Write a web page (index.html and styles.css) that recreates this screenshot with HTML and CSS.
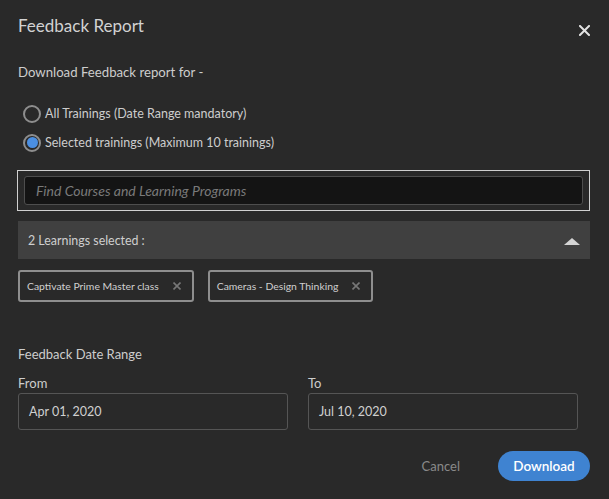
FILE: index.html
```html
<!DOCTYPE html>
<html>
<head>
<meta charset="utf-8">
<link rel="stylesheet" href="styles.css">
</head>
<body>
<div class="dialog">
  <div class="header">
    <h1 class="title">Feedback Report</h1>
    <button class="close" aria-label="Close">
      <svg width="11" height="11" viewBox="0 0 11 11"><path d="M1 1L10 10M10 1L1 10" stroke="#e2e2e2" stroke-width="2" stroke-linecap="square"/></svg>
    </button>
  </div>
  <p class="lead">Download Feedback report for -</p>
  <div class="radios">
    <label class="radio"><span class="ring"></span><span>All Trainings (Date Range mandatory)</span></label>
    <label class="radio"><span class="ring checked"></span><span>Selected trainings (Maximum 10 trainings)</span></label>
  </div>
  <div class="search">
    <div class="search-input">Find Courses and Learning Programs</div>
  </div>
  <div class="selbar">
    <span>2 Learnings selected :</span>
    <span class="tri"></span>
  </div>
  <div class="chips">
    <div class="chip"><span>Captivate Prime Master class</span><svg width="8" height="8" viewBox="0 0 8 8"><path d="M0.5 0.5L7.5 7.5M7.5 0.5L0.5 7.5" stroke="#777" stroke-width="1.6"/></svg></div>
    <div class="chip"><span>Cameras - Design Thinking</span><svg width="8" height="8" viewBox="0 0 8 8"><path d="M0.5 0.5L7.5 7.5M7.5 0.5L0.5 7.5" stroke="#777" stroke-width="1.6"/></svg></div>
  </div>
  <p class="section">Feedback Date Range</p>
  <div class="dates">
    <div class="field">
      <div class="label">From</div>
      <div class="date">Apr 01, 2020</div>
    </div>
    <div class="field">
      <div class="label">To</div>
      <div class="date">Jul 10, 2020</div>
    </div>
  </div>
  <div class="actions">
    <button class="cancel">Cancel</button>
    <button class="download">Download</button>
  </div>
</div>
</body>
</html>
```
FILE: styles.css
```css
html, body {
  margin: 0;
  padding: 0;
  background: #292929;
}
body {
  font-family: "Lato", "Open Sans", sans-serif;
  color: #cdcdcd;
  width: 609px;
  height: 499px;
  overflow: hidden;
}
.dialog {
  padding: 0 19px 0 18px;
}
.header {
  display: flex;
  justify-content: space-between;
  align-items: flex-start;
  padding-top: 14px;
  height: 48px;
  box-sizing: border-box;
}
.title {
  margin: 0;
  font-size: 17px;
  line-height: 24px;
  font-weight: 400;
  color: #d2d2d2;
}
.close {
  background: none;
  border: 0;
  padding: 0;
  margin: 11px 0 0 0;
  width: 11px;
  height: 11px;
  display: block;
  line-height: 0;
}
.lead {
  margin: 14px 0 0 0;
  font-size: 13.2px;
  line-height: 20px;
}
.radios {
  margin-top: 17px;
  display: flex;
  flex-direction: column;
}
.radio {
  display: flex;
  align-items: center;
  height: 29px;
  gap: 4px;
  font-size: 12.5px;
  padding-left: 5px;
}
.ring {
  width: 18px;
  height: 18px;
  box-sizing: border-box;
  border: 2px solid #8e8e8e;
  border-radius: 50%;
  display: flex;
  align-items: center;
  justify-content: center;
}
.ring.checked::after {
  content: "";
  width: 11px;
  height: 11px;
  border-radius: 50%;
  background: #4b8fe2;
}
.search {
  margin-top: 13px;
  border: 1px solid #d0d0d0;
  padding: 5px 6px;
  margin-left: -1px;
}
.search-input {
  background: #141414;
  border: 1px solid #4e4e4e;
  border-radius: 3px;
  height: 27px;
  line-height: 27px;
  padding-left: 11px;
  font-size: 14px;
  font-style: italic;
  color: #7a7a7a;
}
.selbar {
  margin-top: 10px;
  background: #404040;
  height: 38px;
  display: flex;
  align-items: center;
  justify-content: space-between;
  padding: 0 10px 0 10px;
  font-size: 12.4px;
  color: #cfcfcf;
}
.tri {
  width: 0;
  height: 0;
  border-left: 8px solid transparent;
  border-right: 8px solid transparent;
  border-bottom: 7px solid #d4d4d4;
  margin-top: 2px;
}
.chips {
  margin-top: 11px;
  display: flex;
  gap: 14px;
}
.chip {
  height: 32px;
  box-sizing: border-box;
  border: 2px solid #8e8e8e;
  border-radius: 3px;
  display: flex;
  align-items: center;
  gap: 14px;
  padding: 0 11px 0 7px;
  font-size: 10.4px;
  color: #d0d0d0;
}
.section {
  margin: 43px 0 0 0;
  font-size: 13px;
  line-height: 18px;
}
.dates {
  margin-top: 11px;
  display: grid;
  grid-template-columns: 270px 270px;
  column-gap: 20px;
}
.label {
  font-size: 13px;
  line-height: 18px;
  margin-bottom: 1px;
}
.date {
  height: 37px;
  box-sizing: border-box;
  border: 1px solid #555;
  border-radius: 3px;
  display: flex;
  align-items: center;
  padding-left: 10px;
  font-size: 12.5px;
  color: #d0d0d0;
}
.actions {
  margin-top: 21px;
  display: flex;
  justify-content: flex-end;
  align-items: center;
  gap: 38px;
}
.cancel {
  background: none;
  border: 0;
  padding: 0;
  font-family: inherit;
  font-size: 13px;
  color: #8a8a8a;
}
.download {
  background: #3f83d1;
  border: 0;
  border-radius: 15px;
  height: 30px;
  width: 92px;
  font-family: inherit;
  font-size: 13.5px;
  color: #ffffff;
  font-weight: 600;
}
```
